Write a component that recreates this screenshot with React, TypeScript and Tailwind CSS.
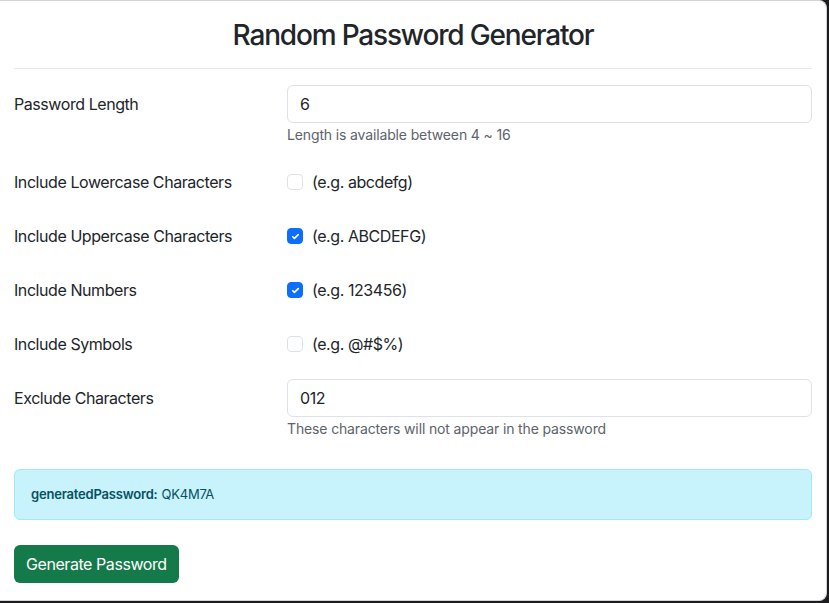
import React, { useState } from "react";

const font = { fontFamily: "Inter, 'Liberation Sans', sans-serif" };

function Check({ checked, onChange }: { checked: boolean; onChange: () => void }) {
  return (
    <button
      type="button"
      onClick={onChange}
      className={
        "w-4 h-4 rounded-[4px] border flex items-center justify-center shrink-0 " +
        (checked ? "bg-[#0d6efd] border-[#0d6efd]" : "bg-white border-[#dee2e6]")
      }
    >
      {checked && (
        <svg viewBox="0 0 20 20" className="w-[11px] h-[11px]">
          <path d="M5 10.5l3 3 7-7" fill="none" stroke="white" strokeWidth="3" strokeLinecap="round" strokeLinejoin="round" />
        </svg>
      )}
    </button>
  );
}

export default function App() {
  const [length, setLength] = useState("6");
  const [exclude, setExclude] = useState("012");
  const [opts, setOpts] = useState({ lower: false, upper: true, numbers: true, symbols: false });

  const rows: { key: keyof typeof opts; label: string; example: string }[] = [
    { key: "lower", label: "Include Lowercase Characters", example: "(e.g. abcdefg)" },
    { key: "upper", label: "Include Uppercase Characters", example: "(e.g. ABCDEFG)" },
    { key: "numbers", label: "Include Numbers", example: "(e.g. 123456)" },
    { key: "symbols", label: "Include Symbols", example: "(e.g. @#$%)" },
  ];

  return (
    <div className="w-full h-[603px] bg-[#1c1c1e] overflow-hidden text-[#212529] tracking-[-0.027em]" style={font}>
      <div className="w-[827px] h-[601px] bg-white border-t border-r border-b border-[#d4d4d4] rounded-tr-[8px] rounded-br-[8px] px-[14px]">
        {/* Title */}
        <h2 className="pt-[17px] h-[51px] text-center text-[28px] leading-[34px] font-medium tracking-[-0.042em]">
          Random Password Generator
        </h2>
        <hr className="mt-4 mb-4 border-0 border-t border-[#e9e9e9]" />

        {/* Password length */}
        <div className="grid grid-cols-[273px_1fr] mb-[18px]">
          <label className="py-[7px] text-base leading-6">Password Length</label>
          <div>
            <input
              value={length}
              onChange={(e) => setLength(e.target.value)}
              className="w-full h-[38px] px-3 border border-[#dee2e6] rounded-[6px] text-base outline-none"
            />
            <div className="mt-[1px] text-sm leading-[21px] text-[#5c636a] tracking-[-0.01em]">
              Length is available between 4 ~ 16
            </div>
          </div>
        </div>

        {rows.map((r) => (
          <div key={r.key} className="grid grid-cols-[273px_1fr] mb-4">
            <label className="py-[7px] text-base leading-6">{r.label}</label>
            <div className="flex items-center gap-[9px] h-[38px]">
              <Check checked={opts[r.key]} onChange={() => setOpts({ ...opts, [r.key]: !opts[r.key] })} />
              <span className="text-base">{r.example}</span>
            </div>
          </div>
        ))}

        {/* Exclude */}
        <div className="grid grid-cols-[273px_1fr]">
          <label className="py-[7px] text-base leading-6">Exclude Characters</label>
          <div>
            <input
              value={exclude}
              onChange={(e) => setExclude(e.target.value)}
              className="w-full h-[38px] px-3 border border-[#dee2e6] rounded-[6px] text-base outline-none"
            />
            <div className="mt-[1px] text-sm leading-[21px] text-[#5c636a] tracking-[-0.01em]">
              These characters will not appear in the password
            </div>
          </div>
        </div>

        {/* Result */}
        <div className="mt-[30px] h-[51px] px-4 flex items-center bg-[#c8f2fc] border border-[#9eeaf9] rounded-[6px] text-[13px] text-[#055160] tracking-[-0.015em]">
          <span className="font-semibold">generatedPassword:</span>
          <span className="ml-1">QK4M7A</span>
        </div>

        <button className="mt-[25px] h-[38px] px-3 rounded-[6px] bg-[#157a4a] text-white text-base">
          Generate Password
        </button>
      </div>
    </div>
  );
}
